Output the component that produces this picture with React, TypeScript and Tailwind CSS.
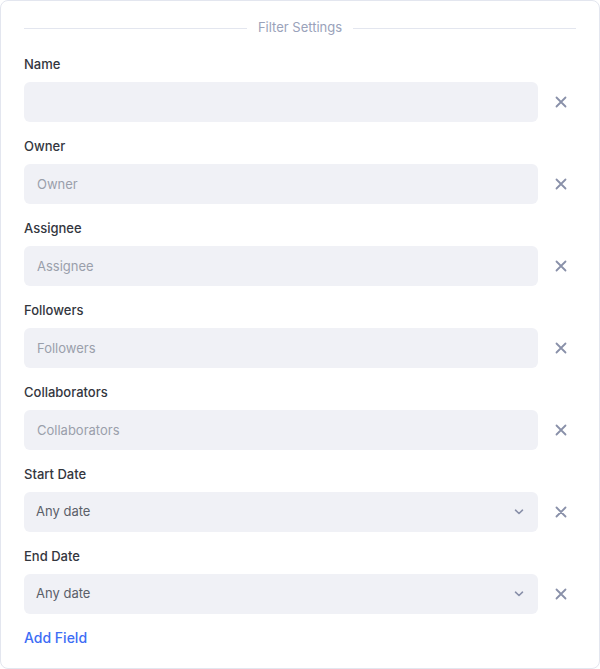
import { useState } from 'react';

type Field = {
  label: string;
  kind: 'text' | 'date';
  placeholder?: string;
};

const initialFields: Field[] = [
  { label: 'Name', kind: 'text' },
  { label: 'Owner', kind: 'text', placeholder: 'Owner' },
  { label: 'Assignee', kind: 'text', placeholder: 'Assignee' },
  { label: 'Followers', kind: 'text', placeholder: 'Followers' },
  { label: 'Collaborators', kind: 'text', placeholder: 'Collaborators' },
  { label: 'Start Date', kind: 'date' },
  { label: 'End Date', kind: 'date' },
];

function CloseIcon() {
  return (
    <svg width="12" height="12" viewBox="0 0 12 12" fill="none">
      <path d="M1.5 1.5l9 9M10.5 1.5l-9 9" stroke="#8990a9" strokeWidth="1.8" strokeLinecap="round" />
    </svg>
  );
}

function Chevron() {
  return (
    <svg width="10" height="6" viewBox="0 0 10 6" fill="none">
      <path d="M1.5 1.2L5 4.5l3.5-3.3" stroke="#8990a9" strokeWidth="1.6" strokeLinecap="round" strokeLinejoin="round" />
    </svg>
  );
}

export default function App() {
  const [fields, setFields] = useState<Field[]>(initialFields);

  const removeField = (idx: number) => setFields((f) => f.filter((_, i) => i !== idx));

  return (
    <div className="w-[600px] h-[669px] bg-white font-['Inter',sans-serif]">
      <div className="h-full rounded-lg border border-[#e3e6ef] px-[23px] pt-[17px] pb-[18px]">
        <div className="flex h-5 items-center">
          <div className="h-px flex-1 bg-[#e3e6ef]" />
          <span className="px-[11px] text-[13px] text-[#9aa2ba]">Filter Settings</span>
          <div className="h-px flex-1 bg-[#e3e6ef]" />
        </div>

        <div className="mt-4 flex flex-col gap-[14px]">
          {fields.map((field, idx) => (
            <div key={field.label}>
              <label className="block h-5 text-[13px] font-medium leading-5 text-[#33363e]">{field.label}</label>
              <div className="mt-2 flex items-center">
                {field.kind === 'text' ? (
                  <input
                    className="h-10 w-[514px] rounded-md bg-[#f0f1f6] px-[13px] text-[13px] text-[#33363e] outline-none placeholder:text-[#9a9fab]"
                    placeholder={field.placeholder}
                  />
                ) : (
                  <button className="flex h-10 w-[514px] items-center justify-between rounded-md bg-[#f0f1f6] pl-3 pr-[14px] text-[13px] text-[#5b5f69]">
                    <span>Any date</span>
                    <Chevron />
                  </button>
                )}
                <button
                  onClick={() => removeField(idx)}
                  className="flex flex-1 justify-center pl-2"
                >
                  <CloseIcon />
                </button>
              </div>
            </div>
          ))}
          <button className="h-5 self-start text-[14px] font-medium leading-5 text-[#3d6df5]">Add Field</button>
        </div>
      </div>
    </div>
  );
}
